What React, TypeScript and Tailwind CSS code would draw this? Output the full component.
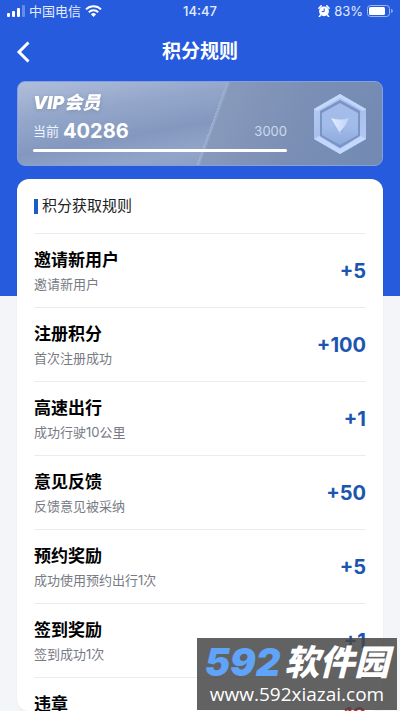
import React from 'react';

interface Rule {
  title: string;
  detail: string;
  points: string;
}

const rules: Rule[] = [
  { title: '邀请新用户', detail: '邀请新用户', points: '+5' },
  { title: '注册积分', detail: '首次注册成功', points: '+100' },
  { title: '高速出行', detail: '成功行驶10公里', points: '+1' },
  { title: '意见反馈', detail: '反馈意见被采纳', points: '+50' },
  { title: '预约奖励', detail: '成功使用预约出行1次', points: '+5' },
  { title: '签到奖励', detail: '签到成功1次', points: '+1' },
  { title: '违章', detail: '', points: '-10' },
];

const StatusBar: React.FC = () => (
  <div className="grid h-[22px] shrink-0 grid-cols-3 items-center px-[7px] text-[13px] leading-4 text-[#e3ecff]">
    <div className="flex items-center gap-1">
      <svg width="18" height="12" viewBox="0 0 18 12" fill="#fff">
        <rect x="0" y="8" width="3" height="4" rx="1" />
        <rect x="5" y="6" width="3" height="6" rx="1" />
        <rect x="10" y="3" width="3" height="9" rx="1" />
        <rect x="15" y="0" width="3" height="12" rx="1" opacity="0.3" />
      </svg>
      <span className="whitespace-nowrap">中国电信</span>
      <svg width="17" height="12" viewBox="0 0 17 12" fill="none" stroke="#fff" strokeWidth="2">
        <path d="M1 4.4a10.6 10.6 0 0 1 15 0" />
        <path d="M3.8 7.3a6.6 6.6 0 0 1 9.4 0" />
        <path d="M8.5 12 5.9 9.3a3.7 3.7 0 0 1 5.2 0z" fill="#fff" stroke="none" />
      </svg>
    </div>
    <span className="text-center text-[13px] leading-4 font-medium">14:47</span>
    <div className="flex items-center justify-end gap-1">
      <svg width="12" height="12" viewBox="0 0 12 12">
        <path d="M.9 3.2 3.2.9M8.8.9l2.3 2.3M2.6 10l-1.2 1.5M9.4 10l1.2 1.5" stroke="#fff" strokeWidth="1.5" strokeLinecap="round" />
        <circle cx="6" cy="6.3" r="4.9" fill="#fff" />
        <path d="M6.2 3.4v3.1H3.7" fill="none" stroke="#265bdd" strokeWidth="1" />
      </svg>
      <span className="text-[13px] leading-4">83%</span>
      <svg width="26" height="12" viewBox="0 0 26 12">
        <rect x=".5" y=".5" width="22" height="11" rx="3" fill="none" stroke="#9db9f5" />
        <rect x="2" y="2" width="16" height="8" rx="1.5" fill="#fff" />
        <path d="M24.3 4v4c1.8-.6 1.8-3.4 0-4z" fill="#b4c9f8" />
      </svg>
    </div>
  </div>
);

const Badge: React.FC = () => (
  <svg className="shrink-0" width="52" height="60" viewBox="0 0 52 60">
    <defs>
      <linearGradient id="rim" x1="0" y1="0" x2="1" y2="1">
        <stop offset="0" stopColor="#b9cff6" />
        <stop offset="0.5" stopColor="#a3bbe8" />
        <stop offset="1" stopColor="#b9cff6" />
      </linearGradient>
      <linearGradient id="core" x1="0" y1="0" x2="0" y2="1">
        <stop offset="0" stopColor="#a3bce8" />
        <stop offset="0.55" stopColor="#a2bbe9" />
        <stop offset="1" stopColor="#8ca8dc" />
      </linearGradient>
      <linearGradient id="gem" x1="0" y1="0" x2="1" y2="0">
        <stop offset="0" stopColor="#e3edff" />
        <stop offset="1" stopColor="#bed2f7" />
      </linearGradient>
    </defs>
    <path d="M26 0 52 15v30L26 60 0 45V15z" fill="url(#rim)" />
    <path d="M26 0 52 15l-3 2L26 4 3 17l-3-2z" fill="#cbdcfc" opacity="0.8" />
    <path d="m0 45 5-3 21 13 21-13 5 3-26 15z" fill="#c9dcff" opacity="0.8" />
    <path d="M26 6 46 17v25L26 54 6 42V17z" fill="#7a94c5" />
    <path d="M26 9 44 19v22L26 51 8 41V19z" fill="url(#core)" />
    <path d="M17 24q9 3 18 0l-8 17z" fill="url(#gem)" />
    <path d="m35 24-8 17-1-3q6-6 9-14z" fill="#8eaade" />
  </svg>
);

const MemberCard: React.FC = () => (
  <section className="relative mx-[17px] flex h-[85px] shrink-0 items-center justify-between overflow-hidden rounded-lg border border-[#84a0df] bg-[linear-gradient(170deg,#b0bedb_0%,#93a6ca_28%,#8498bf_50%,#92a5c9_68%,#7f95bb_100%)] pr-4 pl-[15px]">
    <div className="absolute inset-0 bg-[linear-gradient(110deg,transparent_53%,#a3b5d5_53%,#8799bb_54%,#7b8fb5_75%,#718ab2_100%)]" />
    <div className="relative w-[254px]">
      <h2 className="text-lg leading-5 font-black text-white italic drop-shadow-sm">VIP会员</h2>
      <div className="my-1.5 flex items-center justify-between leading-6">
        <p className="flex items-center gap-1 text-[13px] text-[#edf3ff]">
          当前 <strong className="text-xl leading-6 font-bold text-white">40286</strong>
        </p>
        <span className="text-[13px] text-[#cbd9ef]">3000</span>
      </div>
      <div className="mb-0.5 h-[3px] rounded-full bg-white" />
    </div>
    <div className="relative">
      <Badge />
    </div>
  </section>
);

const RuleRow: React.FC<{ rule: Rule }> = ({ rule }) => (
  <li className="flex h-[74px] items-center justify-between border-t border-[#ebecef]">
    <div>
      <h3 className="text-[17px] leading-6 font-bold text-black">{rule.title}</h3>
      <p className="mt-0.5 h-5 text-[13px] leading-5 text-[#777b84]">{rule.detail}</p>
    </div>
    <span className={`text-xl font-bold ${rule.points.startsWith('-') ? 'text-[#d32a2a]' : 'text-[#1c55b0]'}`}>
      {rule.points}
    </span>
  </li>
);

const Watermark: React.FC = () => (
  <div className="absolute right-[3px] bottom-px flex h-[72px] w-[200px] flex-col items-center justify-center bg-[#474747]/85 whitespace-nowrap">
    <div className="flex items-center gap-1 font-black italic">
      <span className="text-[38px] leading-10 text-[#60a4fa]">592</span>
      <span className="text-[35px] leading-10 text-white">软件园</span>
    </div>
    <span className="font-['Open_Sans',sans-serif] text-[19px] leading-6 font-medium text-white">www.592xiazai.com</span>
  </div>
);

export default function App() {
  return (
    <div className="relative flex h-screen flex-col overflow-hidden bg-[linear-gradient(#265bdd_296px,#f4f5f8_296px)] font-[Inter,'Noto_Sans_CJK_SC',sans-serif]">
      <StatusBar />
      <header className="grid h-[59px] shrink-0 grid-cols-3 items-center px-4">
        <button aria-label="返回" className="w-4">
          <svg width="14" height="22" viewBox="0 0 14 22" fill="none" stroke="#fff" strokeWidth="3">
            <path d="M12.5 1.5 3 11l9.5 9.5" />
          </svg>
        </button>
        <h1 className="text-center text-[19px] leading-7 font-bold text-white">积分规则</h1>
      </header>
      <MemberCard />
      <main className="mx-[17px] mt-[13px] min-h-0 flex-1 overflow-hidden rounded-xl bg-white px-[17px] shadow-xs">
        <h2 className="flex h-[54px] items-center gap-1 text-[15px] text-[#202124]">
          <span className="h-[15px] w-1 bg-[#1c5cc8]" />
          积分获取规则
        </h2>
        <ul>
          {rules.map((rule) => (
            <RuleRow key={rule.title} rule={rule} />
          ))}
        </ul>
      </main>
      <Watermark />
    </div>
  );
}
